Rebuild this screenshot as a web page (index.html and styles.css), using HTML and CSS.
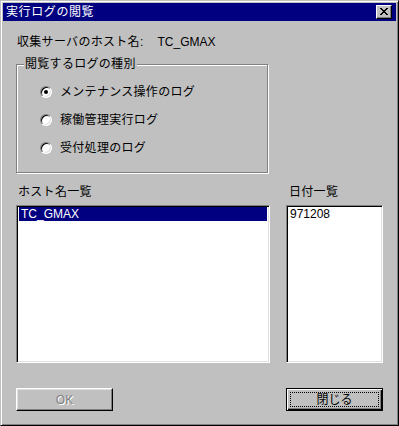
FILE: index.html
```html
<!DOCTYPE html>
<html lang="ja">
<head>
  <meta charset="UTF-8">
  <title>実行ログの閲覧</title>
  <link rel="stylesheet" href="styles.css">
</head>
<body>
  <div class="window">
    <div class="titlebar">
      <span class="title">実行ログの閲覧</span>
      <span class="close-btn">
        <svg width="8" height="7" viewBox="0 0 8 7">
          <path d="M0 0h2v1h1v1h2v-1h1v-1h2v1h-1v1h-1v1h-1v1h1v1h1v1h1v1h-2v-1h-1v-1h-2v1h-1v1h-2v-1h1v-1h1v-1h1v-1h-1v-1h-1v-1h-1z" fill="#000"/>
        </svg>
      </span>
    </div>

    <div class="content">
      <div class="host-row">
        <span class="jp">収集サーバのホスト名:</span>
        <span class="host-name">TC_GMAX</span>
      </div>

      <div class="group">
        <span class="legend jp">閲覧するログの種別</span>
        <div class="radio-row jp"><span class="radio checked"></span>メンテナンス操作のログ</div>
        <div class="radio-row jp"><span class="radio"></span>稼働管理実行ログ</div>
        <div class="radio-row jp"><span class="radio"></span>受付処理のログ</div>
      </div>

      <div class="lists">
        <div class="list-col host-col">
          <div class="list-label jp">ホスト名一覧</div>
          <div class="listbox">
            <div class="item selected">TC_GMAX</div>
          </div>
        </div>
        <div class="list-col date-col">
          <div class="list-label jp">日付一覧</div>
          <div class="listbox">
            <div class="item">971208</div>
          </div>
        </div>
      </div>

      <div class="buttons">
        <button class="btn" disabled>OK</button>
        <button class="btn default"><span class="focus">閉じる</span></button>
      </div>
    </div>
  </div>
</body>
</html>
```

FILE: styles.css
```css
body {
  margin: 0;
  padding: 0;
  font-family: "Liberation Sans", "Noto Sans CJK JP", sans-serif;
  font-size: 12px;
  line-height: 14px;
  color: #000;
  background: #c0c0c0;
}
.jp {
  letter-spacing: 0.3px;
}
.window {
  box-sizing: border-box;
  width: 399px;
  height: 426px;
  background: #c0c0c0;
  border: 1px solid;
  border-color: #c0c0c0 #000 #000 #c0c0c0;
  box-shadow: inset 1px 1px 0 #fff, inset -1px -1px 0 #808080;
  padding: 2px;
}
.titlebar {
  height: 18px;
  background: #000080;
  color: #fff;
  display: flex;
  align-items: center;
  justify-content: space-between;
  padding: 0 4px 0 3px;
}
.title {
  font-size: 12px;
  line-height: 14px;
  letter-spacing: 0.6px;
}
.close-btn {
  box-sizing: border-box;
  width: 16px;
  height: 14px;
  background: #c0c0c0;
  border: 1px solid;
  border-color: #fff #000 #000 #fff;
  box-shadow: inset -1px -1px 0 #808080;
  display: flex;
  align-items: center;
  justify-content: center;
  padding: 0 1px 1px 0;
}
.close-btn svg {
  display: block;
}
.content {
  padding: 0 13px;
}
.host-row {
  margin-top: 14px;
  padding-left: 1px;
  display: flex;
}
.host-name {
  margin-left: 14px;
}
.group {
  position: relative;
  box-sizing: border-box;
  width: 252px;
  height: 109px;
  margin-top: 15px;
  border: 1px solid #808080;
  box-shadow: 1px 1px 0 #fff, inset 1px 1px 0 #fff;
  padding: 13px 0 0 23px;
}
.legend {
  position: absolute;
  top: -8px;
  left: 7px;
  padding: 0 1px;
  background: #c0c0c0;
}
.radio-row {
  height: 28px;
  display: flex;
  align-items: center;
  gap: 8px;
}
.radio {
  position: relative;
  box-sizing: border-box;
  width: 12px;
  height: 12px;
  border-radius: 50%;
  background: #fff;
  border: 1px solid;
  border-color: #808080 #fff #fff #808080;
  box-shadow: inset 1px 1px 0 #000, inset -1px -1px 0 #dfdfdf;
}
.radio.checked::after {
  content: "";
  position: absolute;
  left: 3px;
  top: 3px;
  width: 4px;
  height: 4px;
  border-radius: 50%;
  background: #000;
}
.lists {
  display: flex;
  gap: 16px;
  margin-top: 12px;
}
.host-col {
  width: 254px;
}
.date-col {
  width: 97px;
}
.list-label {
  height: 14px;
  padding-left: 2px;
  margin-bottom: 6px;
}
.date-col .list-label {
  padding-left: 3px;
}
.listbox {
  box-sizing: border-box;
  height: 158px;
  background: #fff;
  border: 1px solid;
  border-color: #808080 #fff #fff #808080;
  box-shadow: inset 1px 1px 0 #000, inset -1px -1px 0 #dfdfdf;
  padding: 1px 2px 1px 2px;
}
.item {
  height: 14px;
  line-height: 14px;
  padding-left: 2px;
}
.date-col .item {
  padding-left: 1px;
}
.item.selected {
  background: #000080;
  color: #fff;
}
.buttons {
  display: flex;
  justify-content: space-between;
  margin-top: 25px;
}
.btn {
  box-sizing: border-box;
  width: 97px;
  height: 23px;
  margin: 0;
  padding: 0;
  font-family: inherit;
  font-size: 12px;
  line-height: 14px;
  color: #000;
  background: #c0c0c0;
  border: 1px solid;
  border-color: #fff #000 #000 #fff;
  box-shadow: inset -1px -1px 0 #808080, inset 1px 1px 0 #dfdfdf;
  border-radius: 0;
}
.btn:disabled {
  color: #808080;
  text-shadow: 1px 1px 0 #fff;
}
.btn.default {
  border-color: #000;
  box-shadow: inset 1px 1px 0 #fff, inset -1px -1px 0 #000, inset -2px -2px 0 #808080;
  padding: 3px;
}
.focus {
  box-sizing: border-box;
  height: 100%;
  border: 1px dotted #000;
  display: flex;
  align-items: center;
  justify-content: center;
}
```
